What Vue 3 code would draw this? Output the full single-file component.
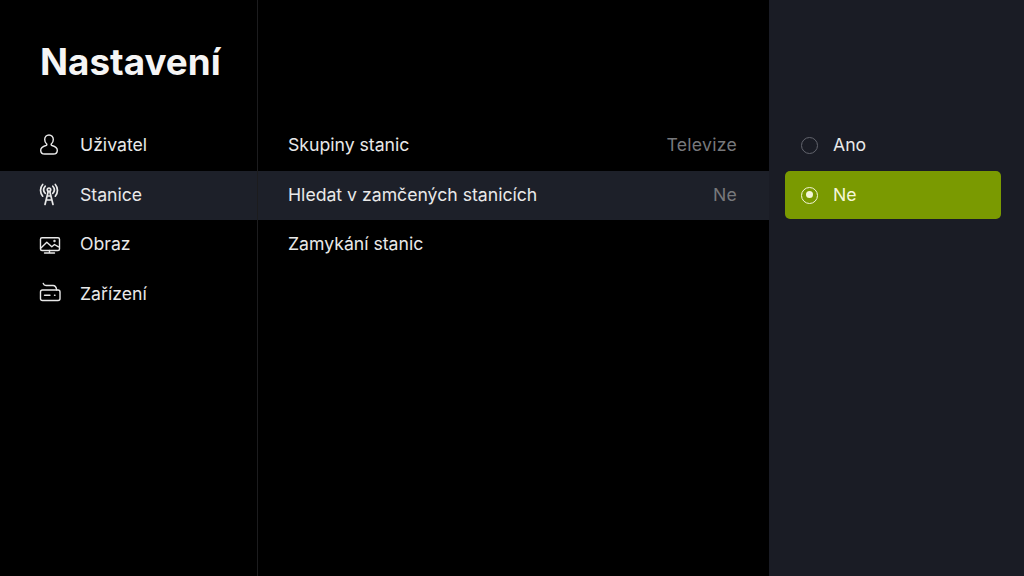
<script setup>
const menu = [
  { label: 'Uživatel', icon: 'user' },
  { label: 'Stanice', icon: 'antenna', active: true },
  { label: 'Obraz', icon: 'screen' },
  { label: 'Zařízení', icon: 'device' }
];

const rows = [
  { label: 'Skupiny stanic', value: 'Televize' },
  { label: 'Hledat v zamčených stanicích', value: 'Ne', active: true },
  { label: 'Zamykání stanic', value: '' }
];

const options = [
  { label: 'Ano' },
  { label: 'Ne', selected: true }
];
</script>

<template>
  <div class="screen">
    <aside class="sidebar">
      <h1 class="title">Nastavení</h1>
      <ul class="menu">
        <li v-for="item in menu" :key="item.label" class="menu_item" :class="{ active: item.active }">
          <svg class="icon" viewBox="0 0 24 24" fill="none" stroke="currentColor" stroke-width="1.4" stroke-linecap="round" stroke-linejoin="round">
            <template v-if="item.icon === 'user'">
              <path d="M11 1C8.500 1 6.700 3 6.700 5.500c0 1.800.7 3.300 1.800 4.300.7.7.4 1.400-.5 1.700C5 12.400 2.700 13.800 2.700 16.200c0 2.300 1.700 3.800 4 3.800h8.600c2.300 0 4-1.500 4-3.800 0-2.400-2.300-3.800-5.300-4.700-.9-.3-1.200-1-.5-1.700 1.100-1 1.800-2.500 1.800-4.300C15.300 3 13.500 1 11 1z" />
            </template>
            <template v-else-if="item.icon === 'antenna'">
              <g stroke-width="1.7">
                <circle cx="11" cy="6.700" r="1.700" />
                <path d="M10.200 8.500 7 21.500M11.800 8.500 15 21.500M9 13h4M8 17h6" />
                <path d="M7.200 3.200c-1.900 2.100-1.900 5 0 7.100M14.800 3.200c1.900 2.100 1.900 5 0 7.100" />
                <path d="M4.700 1.500c-2.900 3.300-2.900 8.400 0 11.700M17.300 1.500c2.900 3.300 2.900 8.400 0 11.700" />
              </g>
            </template>
            <template v-else-if="item.icon === 'screen'">
              <rect x="2.500" y="4.800" width="19" height="12.700" rx="1.500" />
              <path d="M6.500 20h10M11.500 17.500V20" />
              <path d="M3.200 14.800 8.800 9.200l5 4.600 2.700-2.300 4 2.300" />
              <circle cx="16.500" cy="8" r=".5" />
            </template>
            <template v-else>
              <path d="M5.300 1.500c.4 1.300 1.200 2 2.700 2h7c2 0 3.300 1.700 3.700 4.500" />
              <rect x="2.500" y="8" width="19.500" height="10.500" rx="2" />
              <path d="M6.500 13.300h5.500M16.500 13.300h.5" />
            </template>
          </svg>
          <span class="text">{{ item.label }}</span>
        </li>
      </ul>
    </aside>

    <main class="content">
      <ul>
        <li v-for="row in rows" :key="row.label" class="row" :class="{ active: row.active }">
          <span class="text">{{ row.label }}</span>
          <span class="text value">{{ row.value }}</span>
        </li>
      </ul>
    </main>

    <section class="panel">
      <ul>
        <li v-for="opt in options" :key="opt.label" class="option" :class="{ selected: opt.selected }">
          <span class="radio"></span>
          <span class="text">{{ opt.label }}</span>
        </li>
      </ul>
    </section>
  </div>
</template>

<style scoped>
.screen {
  display: flex;
  width: 1024px;
  height: 576px;
  overflow: hidden;
  background: #000;
  color: #e9e9e9;
  font-family: "Inter", "Liberation Sans", sans-serif;
  font-size: 17.65px;
}

ul {
  list-style: none;
  margin: 0;
  padding: 0;
}

.text {
  padding-bottom: 2px;
}

.sidebar {
  width: 257px;
  flex: none;
  border-right: 1px solid #1c1c1e;
}

.title {
  margin: 0;
  padding: 41px 0 0 40px;
  height: 120px;
  box-sizing: border-box;
  font-size: 36.8px;
  line-height: 42px;
  font-weight: 700;
  color: #f5f5f5;
}

.menu {
  padding-top: 1px;
}

.menu_item {
  display: flex;
  align-items: center;
  height: 49.5px;
  padding-left: 38px;
}

.menu_item.active,
.row.active {
  background: #1d2029;
}

.icon {
  width: 24px;
  height: 24px;
  margin-right: 18px;
  flex: none;
}

.content {
  flex: 1;
  padding-top: 121px;
}

.row {
  display: flex;
  justify-content: space-between;
  align-items: center;
  height: 49.5px;
  padding: 0 32px 0 30px;
}

.value {
  color: #77787b;
  letter-spacing: 0.25px;
}

.panel {
  width: 255px;
  flex: none;
  box-sizing: border-box;
  padding: 121px 23px 0 16px;
  background: #1a1c25;
}

.option {
  display: flex;
  align-items: center;
  height: 48px;
  margin-bottom: 2px;
  padding-left: 16px;
  border-radius: 5px;
}

.option.selected {
  background: #7a9a01;
  color: #f4f6d8;
}

.radio {
  position: relative;
  width: 17px;
  height: 17px;
  box-sizing: border-box;
  margin-right: 15px;
  border: 1.5px solid #62646d;
  border-radius: 50%;
}

.selected .radio {
  border-color: #f4f6d8;
}

.selected .radio::after {
  content: '';
  position: absolute;
  top: 3.5px;
  left: 3.5px;
  width: 7px;
  height: 7px;
  border-radius: 50%;
  background: #f4f6d8;
}
</style>
